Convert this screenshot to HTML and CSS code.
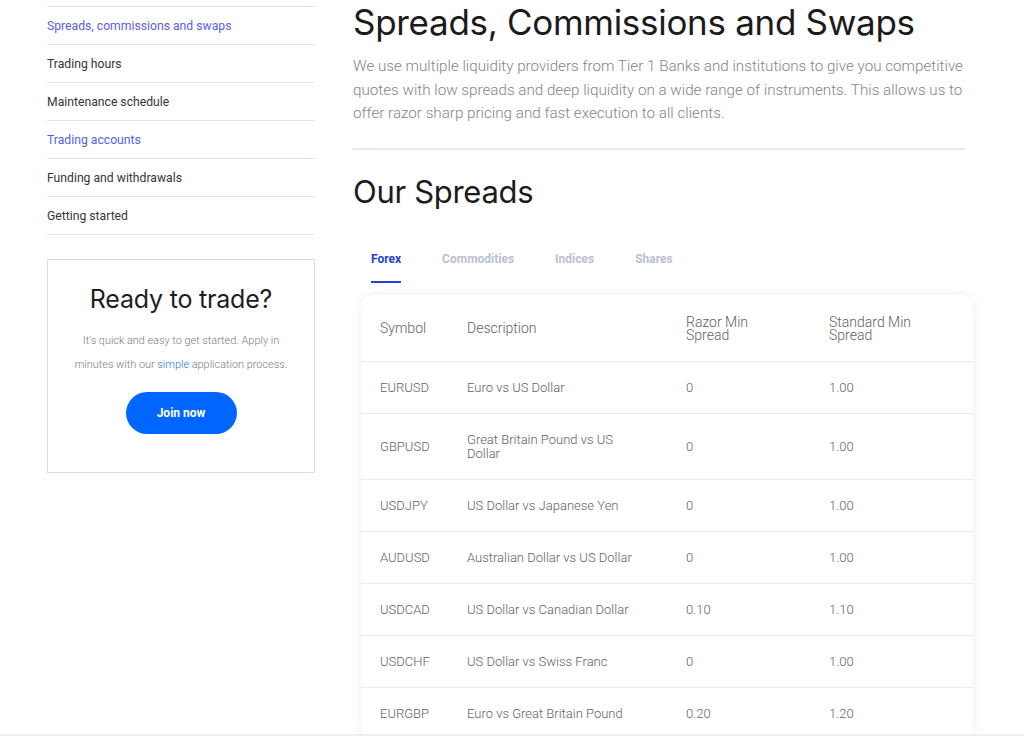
FILE: index.html
```html
<!DOCTYPE html>
<html lang="en">
<head>
<meta charset="utf-8">
<title>Spreads, Commissions and Swaps</title>
<link rel="stylesheet" href="styles.css">
</head>
<body>
<div class="page">
  <aside class="sidebar">
    <ul class="side-nav">
      <li><a class="link-active" href="#">Spreads, commissions and swaps</a></li>
      <li><a href="#">Trading hours</a></li>
      <li><a href="#">Maintenance schedule</a></li>
      <li><a class="link-active" href="#">Trading accounts</a></li>
      <li><a href="#">Funding and withdrawals</a></li>
      <li><a href="#">Getting started</a></li>
    </ul>
    <div class="cta">
      <h3 class="cta-title">Ready to trade?</h3>
      <p class="cta-text">It's quick and easy to get started. Apply in minutes with our <a href="#">simple</a> application process.</p>
      <a class="cta-btn" href="#">Join now</a>
    </div>
  </aside>
  <main class="main">
    <h1 class="title">Spreads, Commissions and Swaps</h1>
    <p class="lead">We use multiple liquidity providers from Tier 1 Banks and institutions to give you competitive quotes with low spreads and deep liquidity on a wide range of instruments. This allows us to offer razor sharp pricing and fast execution to all clients.</p>
    <hr class="divider">
    <h2 class="subtitle">Our Spreads</h2>
    <div class="tabs">
      <span class="tab tab-active">Forex</span>
      <span class="tab">Commodities</span>
      <span class="tab">Indices</span>
      <span class="tab">Shares</span>
    </div>
    <div class="table-card">
      <table class="spreads">
        <colgroup>
          <col class="c1"><col class="c2"><col class="c3"><col class="c4">
        </colgroup>
        <thead>
          <tr><th>Symbol</th><th>Description</th><th><span class="hd">Razor Min Spread</span></th><th><span class="hd">Standard Min Spread</span></th></tr>
        </thead>
        <tbody>
          <tr><td>EURUSD</td><td>Euro vs US Dollar</td><td>0</td><td>1.00</td></tr>
          <tr><td>GBPUSD</td><td>Great Britain Pound vs US Dollar</td><td>0</td><td>1.00</td></tr>
          <tr><td>USDJPY</td><td>US Dollar vs Japanese Yen</td><td>0</td><td>1.00</td></tr>
          <tr><td>AUDUSD</td><td>Australian Dollar vs US Dollar</td><td>0</td><td>1.00</td></tr>
          <tr><td>USDCAD</td><td>US Dollar vs Canadian Dollar</td><td>0.10</td><td>1.10</td></tr>
          <tr><td>USDCHF</td><td>US Dollar vs Swiss Franc</td><td>0</td><td>1.00</td></tr>
          <tr><td>EURGBP</td><td>Euro vs Great Britain Pound</td><td>0.20</td><td>1.20</td></tr>
        </tbody>
      </table>
    </div>
  </main>
</div>
<div class="bottom-edge"></div>
</body>
</html>
```
FILE: styles.css
```css
html, body {
  margin: 0;
  padding: 0;
  background: #ffffff;
  overflow: hidden;
}
body {
  font-family: Roboto, "Liberation Sans", Arial, sans-serif;
  color: #333;
}
a { text-decoration: none; }

.page {
  display: flex;
  gap: 38px;
  padding-left: 47px;
  align-items: flex-start;
}

/* Sidebar */
.sidebar {
  width: 268px;
  flex: none;
}
.side-nav {
  list-style: none;
  margin: 6px 0 0;
  padding: 0;
  border-top: 1px solid #dfe4ea;
}
.side-nav li {
  border-bottom: 1.5px solid #dfe4ea;
}
.side-nav a {
  display: block;
  font-size: 12.2px;
  line-height: 15px;
  padding: 12px 0 10px;
  color: #363636;
}
.side-nav a.link-active { color: #5b5ee6; }

.cta {
  margin-top: 24px;
  border: 1px solid #d9dfe6;
  padding: 24px 16px 38px;
  text-align: center;
}
.cta-title {
  margin: 0;
  font-family: Inter, "Open Sans", sans-serif;
  font-weight: 400;
  font-size: 25px;
  line-height: 30px;
  color: #1e1e1e;
  letter-spacing: -0.2px;
}
.cta-text {
  margin: 15px 0 0;
  font-size: 10.9px;
  line-height: 24px;
  font-weight: 300;
  color: #7a7a7a;
}
.cta-text a { color: #2f6fdc; }
.cta-btn {
  display: inline-block;
  margin-top: 15px;
  width: 111px;
  height: 42px;
  line-height: 42px;
  border-radius: 21px;
  background: #0066ff;
  color: #fff;
  font-size: 12px;
  font-weight: 700;
}

/* Main */
.main {
  width: 612px;
  flex: none;
}
.title {
  margin: 2px 0 0;
  font-family: Inter, "Open Sans", sans-serif;
  font-weight: 400;
  font-size: 35px;
  line-height: 40px;
  color: #1b1b1b;
  letter-spacing: -0.3px;
}
.lead {
  margin: 13px 0 0;
  font-size: 15.2px;
  line-height: 23.5px;
  font-weight: 300;
  color: #858585;
}
.divider {
  border: 0;
  height: 2px;
  background: #e6eaef;
  margin: 22px 0 0;
}
.subtitle {
  margin: 22px 0 0;
  font-family: Inter, "Open Sans", sans-serif;
  font-weight: 400;
  font-size: 31px;
  line-height: 40px;
  color: #1b1b1b;
  letter-spacing: -0.3px;
}
.tabs {
  display: flex;
  gap: 41px;
  padding-left: 18px;
  margin-top: 40px;
}
.tab {
  font-size: 12px;
  font-weight: 700;
  color: #b9c1cb;
  line-height: 14px;
  padding-bottom: 15px;
  border-bottom: 2px solid transparent;
}
.tab-active {
  color: #1d3fd6;
  border-bottom-color: #2a3fe0;
}

.table-card {
  margin: 12px 0 0 8px;
  width: 612px;
  background: #fff;
  border-radius: 12px;
  box-shadow: 0 0 12px rgba(0, 0, 0, 0.07);
  overflow: hidden;
}
.spreads {
  width: 100%;
  border-collapse: collapse;
  table-layout: fixed;
}
.c1 { width: 87px; }
.c2 { width: 219px; }
.c3 { width: 143px; }
.c4 { width: 163px; }
.spreads th, .spreads td {
  text-align: left;
  padding: 19px 20px 18px 19px;
  vertical-align: middle;
  font-weight: 300;
  color: #626262;
}
.spreads th {
  font-size: 14px;
  line-height: 13px;
  padding-top: 21px;
  padding-bottom: 19.5px;
  border-bottom: 1px solid #e7ecee;
}
.hd {
  display: block;
  max-width: 95px;
}
.spreads td {
  font-size: 13px;
  line-height: 14px;
  border-bottom: 1px solid #e7ecee;
}

.bottom-edge {
  position: fixed;
  left: 0;
  right: 0;
  bottom: 0;
  height: 2px;
  background: #efefef;
}
```
